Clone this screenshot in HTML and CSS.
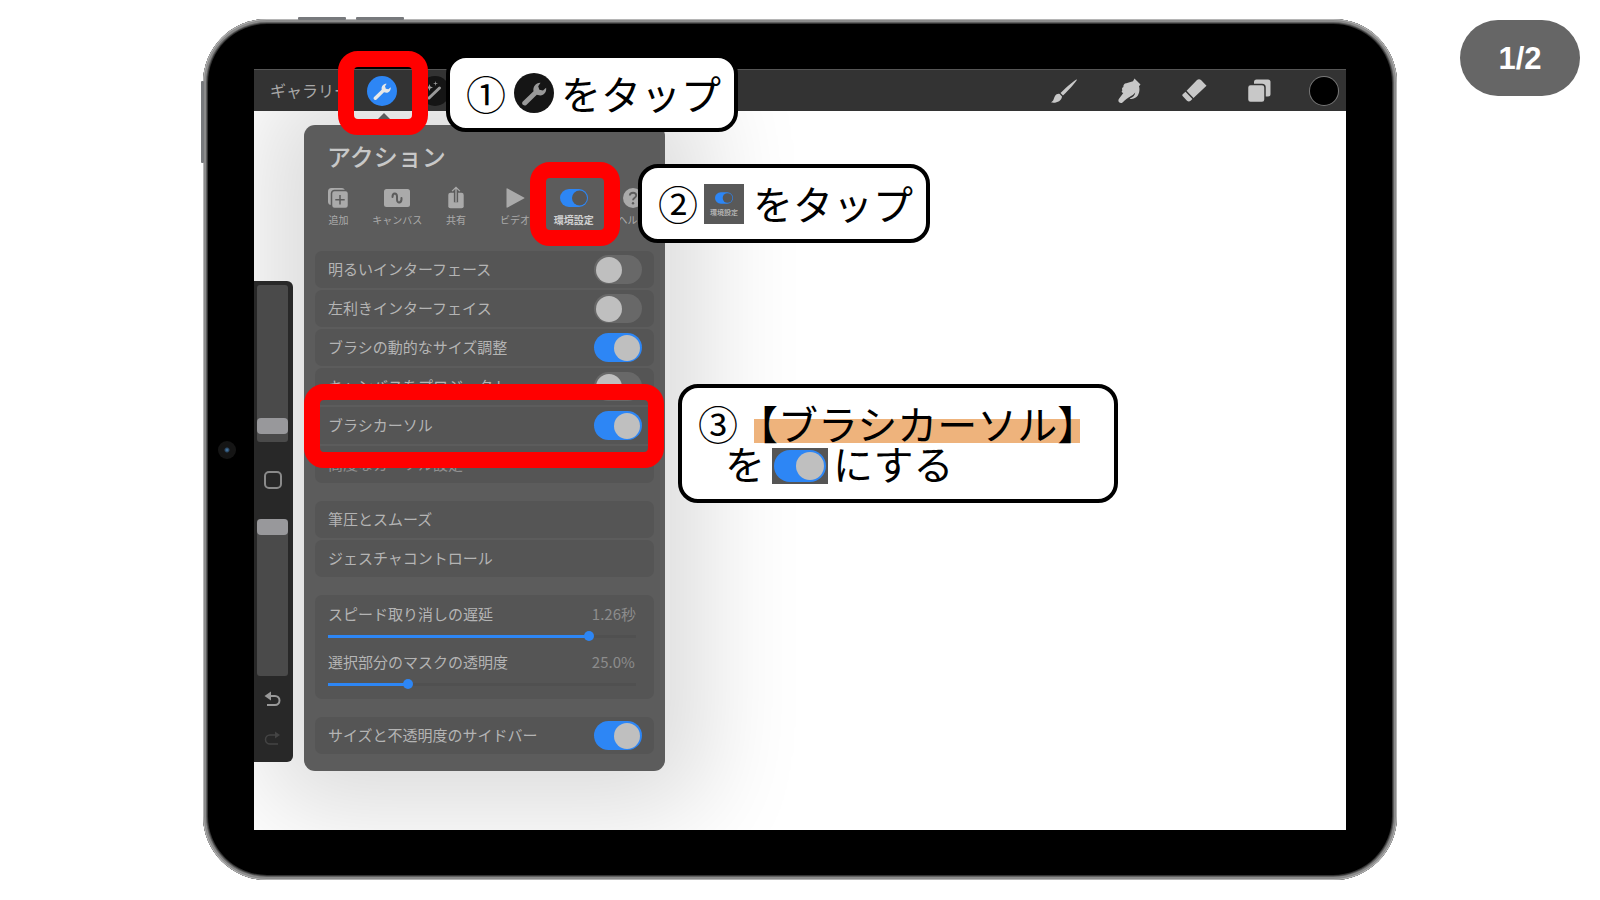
FILE: index.html
```html
<!DOCTYPE html>
<html lang="ja">
<head>
<meta charset="utf-8">
<title>ブラシカーソルの設定</title>
<link rel="stylesheet" href="styles.css">
</head>
<body>
<svg class="defs" aria-hidden="true">
  <symbol id="wrench" viewBox="0 0 24 24">
    <path d="M2.2 19.6 11.6 10.6C10.9 7.6 12.6 4.4 15.8 3.4L17.6 3.2 15.6 6.2 16.6 9.2 19.7 9.9 22.4 7.4C22.9 10.9 20.7 13.9 17.4 14.1L14.4 13.5 5.2 22.4C3.2 23.6.9 21.4 2.2 19.6Z"/>
  </symbol>
  <symbol id="pref" viewBox="0 0 28 18">
    <rect x="0" y="0" width="28" height="18" rx="9" fill="#2d86f5"/>
    <circle cx="19.500" cy="9" r="7.500" fill="#565656"/>
  </symbol>
</svg>
<main class="stage">
  <section class="device">
    <span class="hw hw-top-a"></span>
    <span class="hw hw-top-b"></span>
    <span class="hw hw-side"></span>
    <span class="camera"></span>
    <div class="screen">
      <header class="topbar">
        <nav class="left-tools">
          <button class="gallery">ギャラリー</button>
          <button class="round active" aria-label="アクション"><svg width="20" height="20"><use href="#wrench"/></svg></button>
          <button class="round" aria-label="調整"><svg width="20" height="20" viewBox="0 0 20 20"><path d="M4 17 14.500 7" stroke="currentColor" stroke-width="3" stroke-linecap="round"/><path d="M4.500 3 5.400 5.600 8 6.500 5.400 7.400 4.500 10 3.600 7.400 1 6.500 3.600 5.600ZM10.500 0 11 2 13 2.500 11 3 10.500 5 10 3 8 2.500 10 2Z"/></svg></button>
        </nav>
        <nav class="right-tools">
          <button class="tool" aria-label="ブラシ"><svg width="28" height="28" viewBox="0 0 28 28"><path d="M27 2.500C27.500 3 20 12 13 18.500L10.500 16C17 9.500 26 1.800 27 2.500ZM9.700 17 12 19.400C11.500 24.500 5.500 26.500.9 25.300 4 24 3.500 21.500 5 19 6.200 17 8.200 16.500 9.700 17Z"/></svg></button>
          <button class="tool" aria-label="ぼかし"><svg width="28" height="28" viewBox="0 0 28 28"><path d="M19.500 1.600 25.500 7.500 24 9.200C25.300 13 23.800 19 20.700 20.600 18.800 22 16 22.400 14.600 21.400 17.800 20.400 20 18.300 20.200 15.400 17.500 19.400 13 19.500 7.800 25.200 5.300 27.500 1.800 24.600 4.200 21.600L8.300 15.900C6.300 15.800 6.400 14 7.400 13.200 6.600 12 7.100 10.600 8.400 10 8 8 9.400 6.300 11.300 6.200L18 4.200Z"/></svg></button>
          <button class="tool" aria-label="消しゴム"><svg width="28" height="28" viewBox="0 0 28 28"><path d="M17 3.100Q19 1.200 21 3.100L26.500 8.700 13.500 21 6.600 13.700ZM5.500 14.800 12.400 22 10.600 23.700Q8.800 25.300 7 23.700L2.600 19.100Q1.500 18 3 17Z"/></svg></button>
          <button class="tool" aria-label="レイヤー"><svg width="28" height="28" viewBox="0 0 28 28"><rect x="9" y="2.500" width="16.500" height="17" rx="2.500"/><rect x="2.500" y="7.500" width="17.500" height="18" rx="3" stroke="#333" stroke-width="1.500"/></svg></button>
          <button class="swatch" aria-label="カラー"></button>
        </nav>
      </header>
      <div class="canvas">
        <aside class="sidebar">
          <input class="vslider" type="range" value="94" aria-label="ブラシサイズ">
          <button class="modify" aria-label="スポイト"></button>
          <input class="vslider" type="range" value="0" aria-label="不透明度">
          <button class="history" aria-label="取り消す"><svg width="20" height="18" viewBox="0 0 20 18"><path d="M4 6H12A4.500 4.500 0 0 1 12 15H4" fill="none" stroke="currentColor" stroke-width="2"/><path d="M8 1.500V10.500L1.500 6Z"/></svg></button>
          <button class="history faded" aria-label="やり直す"><svg width="20" height="18" viewBox="0 0 20 18"><path d="M14 6H7A4.500 4.500 0 0 0 7 15H15" fill="none" stroke="currentColor" stroke-width="1.500"/><path d="M12 2.500V9.500L17 6Z"/></svg></button>
        </aside>

        <section class="popover">
          <h1>アクション</h1>
          <nav class="tabs">
            <button><svg width="26" height="24" viewBox="0 0 26 24"><rect x="3" y="2" width="17" height="17" rx="3.500"/><rect x="6.500" y="4.500" width="17" height="18" rx="3" stroke="#5c5c5c" stroke-width="1.500"/><path d="M15 9V18.500M10.300 13.700H19.700" stroke="#5c5c5c" stroke-width="1.500"/></svg>追加</button>
            <button><svg width="26" height="24" viewBox="0 0 26 24"><rect x="0" y="3" width="26" height="18" rx="2.500"/><path d="M8.500 11C8.500 6.500 13 6.500 13 10.500V13.500C13 18 18 17.500 17.500 12" fill="none" stroke="#5c5c5c" stroke-width="2" stroke-linecap="round"/></svg>キャンバス</button>
            <button><svg width="26" height="28" viewBox="0 0 26 28"><rect x="4" y="8" width="18" height="18" rx="2.500"/><path d="M13 19V3" stroke="#5c5c5c" stroke-width="5"/><path d="M13 19V1.500M8.500 6 13 1.500 17.500 6" fill="none" stroke="currentColor" stroke-width="1.500"/></svg>共有</button>
            <button><svg width="26" height="24" viewBox="0 0 26 24"><path d="M4.500 3Q4.500 2 5.500 2.500L22 11.500Q23 12 22 12.500L5.500 21.500Q4.500 22 4.500 21Z"/></svg>ビデオ</button>
            <button class="current"><svg width="28" height="18"><use href="#pref"/></svg>環境設定</button>
            <button><svg width="26" height="24" viewBox="0 0 26 24"><circle cx="13" cy="12" r="10"/><path d="M9.800 9.500C10 5.800 16.200 5.800 16.200 9.500 16.200 11.700 13 11.800 13 14.300" fill="none" stroke="#5c5c5c" stroke-width="1.800"/><circle cx="13" cy="17.300" r="1.200" fill="#5c5c5c"/></svg>ヘルプ</button>
          </nav>
          <div class="group">
            <label class="row">明るいインターフェース<input class="switch" type="checkbox"></label>
            <label class="row">左利きインターフェイス<input class="switch" type="checkbox"></label>
            <label class="row">ブラシの動的なサイズ調整<input class="switch" type="checkbox" checked></label>
            <label class="row">キャンバスをプロジェクト<input class="switch" type="checkbox"></label>
            <label class="row">ブラシカーソル<input class="switch" type="checkbox" checked></label>
            <button class="row dim">高度なカーソル設定</button>
          </div>
          <div class="group">
            <button class="row">筆圧とスムーズ</button>
            <button class="row">ジェスチャコントロール</button>
          </div>
          <div class="group sliders">
            <label for="delay">スピード取り消しの遅延</label><output for="delay">1.26秒</output>
            <input class="hslider" id="delay" type="range" value="86" style="--fill:86%">
            <label for="mask">選択部分のマスクの透明度</label><output for="mask">25.0%</output>
            <input class="hslider" id="mask" type="range" value="25" style="--fill:26%">
          </div>
          <div class="group">
            <label class="row">サイズと不透明度のサイドバー<input class="switch" type="checkbox" checked></label>
          </div>
        </section>
      </div>
    </div>
  </section>

  <span class="marker marker-1"></span>
  <span class="marker marker-2"></span>
  <span class="marker marker-3"></span>

  <p class="callout callout-1">①<span class="chip-wrench"><svg width="28" height="28"><use href="#wrench"/></svg></span>をタップ</p>
  <p class="callout callout-2">②<span class="chip-pref"><svg width="18" height="12"><use href="#pref"/></svg><small>環境設定</small></span>をタップ</p>
  <div class="callout callout-3">
    <p>③<mark>【ブラシカーソル】</mark></p>
    <p class="second">を<span class="chip-switch"><i></i></span>にする</p>
  </div>
  <div class="counter">1/2</div>
</main>
</body>
</html>
```
FILE: styles.css
```css
* { box-sizing: border-box; }
body {
  margin: 0;
  background: #fff;
  font-family: "Noto Sans CJK JP", sans-serif;
}
button {
  border: 0;
  padding: 0;
  background: none;
  color: inherit;
  font: inherit;
}
h1, p { margin: 0; }
svg { display: block; fill: currentColor; }
.defs { position: absolute; width: 0; height: 0; }

.stage {
  position: relative;
  display: flex;
  min-height: 100vh;
  padding: 19px 203px 20px;
}

/* Tablet body */
.device {
  position: relative;
  isolation: isolate;
  flex: 1;
  display: flex;
  padding: 50px 51px;
  border-radius: 64px;
  background: #000;
  box-shadow: inset 0 0 0 1px #b5b5b5, inset 0 0 0 3px #8b8b8b, inset 0 0 0 4px #606060, inset 0 0 0 5px #333;
}
.hw { position: absolute; background: #77797c; border-radius: 1px; }
.hw-top-a { left: 95px; top: -2px; width: 48px; height: 3px; }
.hw-top-b { left: 153px; top: -2px; width: 48px; height: 3px; }
.hw-side { left: -2px; top: 62px; width: 3px; height: 82px; }
.camera {
  position: absolute;
  left: 15px;
  top: 422px;
  width: 18px;
  height: 18px;
  border-radius: 50%;
  background: radial-gradient(circle, #4b83b5 0, #29445e 2px, #151515 3px);
}
.screen {
  flex: 1;
  display: flex;
  flex-direction: column;
  overflow: hidden;
  background: #fff;
}

/* Toolbar */
.topbar {
  position: relative;
  z-index: 2;
  display: flex;
  align-items: center;
  justify-content: space-between;
  height: 42px;
  padding: 0 8px 0 16px;
  border-top: 1px solid #555;
  background: #333;
  color: #c8c8c8;
}
.left-tools, .right-tools { display: flex; align-items: center; }
.gallery { width: 97px; padding-bottom: 2px; font-size: 16px; line-height: 24px; text-align: left; color: #a8a8a8; }
.round {
  display: grid;
  place-items: center;
  width: 30px;
  height: 30px;
  margin-right: 23px;
  border-radius: 50%;
  background: #151515;
  color: #999;
}
.round.active { background: #2d86f5; color: #e8e8e8; }
.right-tools { gap: 37px; }
.swatch {
  width: 28px;
  height: 28px;
  border-radius: 50%;
  background: #000;
  box-shadow: 0 0 0 1px #777;
}

.canvas { position: relative; flex: 1; }

/* Brush sidebar */
.sidebar {
  position: relative;
  z-index: 1;
  display: flex;
  flex-direction: column;
  align-items: center;
  width: 39px;
  margin-top: 170px;
  padding: 4px 2px 15px 0;
  border-radius: 0 6px 6px 0;
  background: #282828;
  color: #999;
}
.vslider {
  appearance: none;
  writing-mode: vertical-lr;
  width: 31px;
  height: 157px;
  margin: 0;
  border-radius: 3px;
  background: #4a4a4a;
}
.vslider::-webkit-slider-thumb {
  appearance: none;
  width: 31px;
  height: 16px;
  border-radius: 4px;
  background: #98989b;
}
.modify {
  width: 18px;
  height: 18px;
  margin: 29px 0 30px;
  border: 2px solid #8a8a8a;
  border-radius: 5px;
}
.history { margin-top: 14px; }
.history + .history { margin-top: 21px; }
.faded { color: #444; }

/* Actions popover */
.popover {
  position: absolute;
  left: 50px;
  top: 14px;
  width: 361px;
  padding: 16px 11px 17px;
  border-radius: 11px;
  background: #5c5c5c;
  color: #b4b4b4;
  box-shadow: 0 0 100px 40px rgba(0, 0, 0, .14);
}
.popover::before {
  content: "";
  position: absolute;
  left: 68px;
  top: -12px;
  border: 12px solid transparent;
  border-top: 0;
  border-bottom-color: #5c5c5c;
}
.popover h1 {
  padding-left: 12px;
  font-size: 24px;
  font-weight: 500;
  line-height: 30px;
  color: #c8c8c8;
}
.tabs {
  display: grid;
  grid-template-columns: repeat(6, 1fr);
  margin: 15px -8px 0 -6px;
  font-size: 10px;
  line-height: 14px;
  color: #aaa;
  white-space: nowrap;
}
.tabs button {
  display: flex;
  flex-direction: column;
  align-items: center;
  justify-content: flex-end;
  height: 41px;
  gap: 3px;
}
.tabs .current { font-weight: 700; color: #d0d0d0; gap: 6px; }
.group { display: flex; flex-direction: column; gap: 2px; margin-top: 18px; }
.tabs + .group { margin-top: 24px; }
.row {
  display: flex;
  align-items: center;
  justify-content: space-between;
  height: 37px;
  padding: 0 12px 2px 13px;
  border-radius: 7px;
  background: #555;
  font-size: 15px;
  line-height: 20px;
}
.row.dim { color: #909090; }
.switch, .chip-switch i {
  appearance: none;
  display: flex;
  align-items: center;
  width: 48px;
  height: 29px;
  margin: 0;
  padding: 0 2px;
  border-radius: 15px;
  background: #686868;
}
.switch { position: relative; top: 1px; }
.switch::before, .chip-switch i::before {
  content: "";
  width: 26px;
  height: 26px;
  border-radius: 50%;
  background: #bfbfbf;
}
.switch:checked, .chip-switch i { justify-content: flex-end; background: #2d86f5; }
.sliders {
  display: grid;
  grid-template-columns: 1fr auto;
  gap: 0;
  padding: 10px 18px 10px 13px;
  border-radius: 7px;
  background: #555;
  font-size: 15px;
  line-height: 18px;
}
.sliders output { color: #8c8c8c; }
.hslider {
  appearance: none;
  grid-column: 1 / -1;
  width: 100%;
  height: 10px;
  margin: 8px 0 12px;
  background: linear-gradient(90deg, #2d86f5 var(--fill), #505050 var(--fill)) center / 100% 3px no-repeat;
}
.hslider:last-child { margin-bottom: 0; }
.hslider::-webkit-slider-thumb {
  appearance: none;
  width: 10px;
  height: 10px;
  border-radius: 50%;
  background: #2d86f5;
}

/* Annotations laid over the tablet */
.marker {
  position: absolute;
  width: 90px;
  height: 84px;
  border: 16px solid #f00;
  border-radius: 20px;
}
.marker-1 { left: 338px; top: 51px; }
.marker-2 { left: 530px; top: 162px; }
.marker-3 { left: 304px; top: 384px; width: 360px; }
.callout {
  position: absolute;
  padding: 15px 8px 15px 16px;
  border: 4px solid #000;
  border-radius: 20px;
  background: #fff;
  color: #000;
  font-size: 40px;
  line-height: 40px;
  white-space: nowrap;
}
.callout-1, .callout-2 { display: flex; width: 292px; }
.callout-1 { left: 446px; top: 54px; }
.callout-2 { left: 638px; top: 164px; }
.callout-3 { left: 678px; top: 384px; width: 440px; }
.callout-3 p { display: flex; }
.callout-3 .second { padding-left: 27px; }
.callout mark {
  color: inherit;
  background: linear-gradient(#eeb37c, #eeb37c) 16px 100% / 326px 24px no-repeat;
}
.chip-wrench {
  flex: none;
  display: grid;
  place-items: center;
  width: 40px;
  height: 40px;
  margin: 0 7px 0 8px;
  border-radius: 50%;
  background: #151515;
  color: #999;
}
.chip-pref {
  flex: none;
  display: flex;
  flex-direction: column;
  align-items: center;
  gap: 3px;
  width: 40px;
  height: 40px;
  margin: 1px 9px 0 6px;
  padding-top: 8px;
  background: #595959;
  color: #d0d0d0;
}
.chip-pref small { font-size: 7px; line-height: 10px; }
.chip-switch {
  display: grid;
  place-items: center;
  width: 56px;
  height: 36px;
  margin: 5px 5px 0 7px;
  background: #555;
}
.chip-switch i { width: 52px; height: 32px; border-radius: 16px; }
.chip-switch i::before { width: 28px; height: 28px; }
.counter {
  position: absolute;
  right: 20px;
  top: 20px;
  width: 120px;
  height: 76px;
  border-radius: 38px;
  background: #666;
  color: #fff;
  font: 700 31px/78px "Liberation Sans", sans-serif;
  text-align: center;
}
```
